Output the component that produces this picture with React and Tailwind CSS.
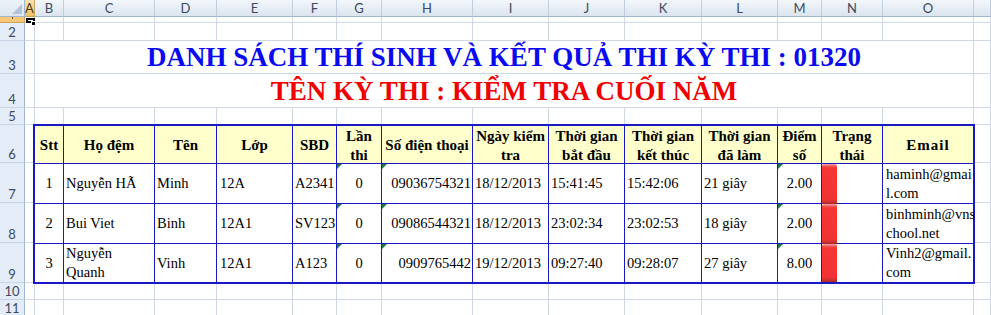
import React from 'react';

const LETTERS = ['A', 'B', 'C', 'D', 'E', 'F', 'G', 'H', 'I', 'J', 'K', 'L', 'M', 'N', 'O'];

const HEAD = [
  ['Stt'], ['Họ đệm'], ['Tên'], ['Lớp'], ['SBD'], ['Lần', 'thi'], ['Số điện thoại'],
  ['Ngày kiểm', 'tra'], ['Thời gian', 'bắt đầu'], ['Thời gian', 'kết thúc'],
  ['Thời gian', 'đã làm'], ['Điểm', 'số'], ['Trạng', 'thái'], ['Email'],
];

const DATA = [
  [['1'], ['Nguyễn HÃ'], ['Minh'], ['12A'], ['A2341'], ['0'], ['09036754321'], ['18/12/2013'], ['15:41:45'], ['15:42:06'], ['21 giây'], ['2.00'], null, ['haminh@gmai', 'l.com']],
  [['2'], ['Bui Viet'], ['Binh'], ['12A1'], ['SV123'], ['0'], ['09086544321'], ['18/12/2013'], ['23:02:34'], ['23:02:53'], ['18 giây'], ['2.00'], null, ['binhminh@vns', 'chool.net']],
  [['3'], ['Nguyễn', 'Quanh'], ['Vinh'], ['12A1'], ['A123'], ['0'], ['0909765442'], ['19/12/2013'], ['09:27:40'], ['09:28:07'], ['27 giây'], ['8.00'], null, ['Vinh2@gmail.', 'com']],
];

const ALIGN = [
  'justify-center text-center',
  'justify-start pl-[2px]',
  'justify-start pl-[2px]',
  'justify-start pl-[3px]',
  'justify-start pl-[2px]',
  'justify-center text-center',
  'justify-end pr-[1px]',
  'justify-start pl-[2px]',
  'justify-start pl-[2px]',
  'justify-start pl-[2px]',
  'justify-start pl-[2px]',
  'justify-center text-center',
  'justify-start',
  'justify-start pl-[3px]',
];

const TRIANGLE_COLS = [5, 6, 11];

function border(r, c) {
  const right = c < 13;
  const bottom = r < 3;
  if (right && bottom) return 'border-r border-b border-[#1818c8]';
  if (right) return 'border-r border-[#1818c8]';
  if (bottom) return 'border-b border-[#1818c8]';
  return '';
}

function Triangle() {
  return (
    <svg className="absolute left-0 top-0" width="5" height="5" viewBox="0 0 5 5">
      <polygon points="0,0 5,0 0,5" fill="#1c7d3a" />
    </svg>
  );
}

function Cell({ className = '' }) {
  return <div className={`bg-white border-r border-b border-[#d0d7e5] ${className}`} />;
}

function RowHeader({ n }) {
  if (n === 1) {
    return (
      <div className="bg-[#f8c878] border-r border-b border-[#c9a35e] flex justify-center overflow-hidden">
        <div className="w-[1px] h-[2px] bg-[#6b5a3a]" />
      </div>
    );
  }
  return (
    <div className="bg-[#e4ecf7] border-r border-r-[#9eb6ce] border-b border-b-[#c5d3e4] flex items-end justify-center pb-[1px] text-[13px] leading-none text-[#3b4a60] font-['Lato',sans-serif]">
      {n}
    </div>
  );
}

function Table() {
  return (
    <div className="col-start-3 col-span-14 row-start-7 row-span-4 -ml-[2px] -mt-[1px] -mr-[1px] -mb-[1px] relative z-10 border-2 border-[#1818c8] bg-white grid grid-cols-[29px_91px_62px_76px_44px_45px_91px_76px_76px_77px_76px_44px_61px_90px] grid-rows-[38px_40px_40px_38px] font-['Liberation_Serif',serif] text-black">
      {HEAD.map((lines, c) => (
        <div
          key={`h${c}`}
          className={`${border(0, c)} bg-[#ffffcc] flex flex-col items-center justify-center pt-[2px] font-bold text-[15px] leading-[19px] whitespace-nowrap ${c === 13 ? 'tracking-[1px]' : ''}`}
        >
          {lines.map((l, i) => (
            <span key={i}>{l}</span>
          ))}
        </div>
      ))}
      {DATA.map((row, r) =>
        row.map((cell, c) => (
          <div
            key={`d${r}-${c}`}
            className={`${border(r + 1, c)} relative flex items-center ${ALIGN[c]} text-[14.5px] leading-[19px] whitespace-nowrap`}
          >
            {TRIANGLE_COLS.includes(c) && <Triangle />}
            {cell === null ? (
              <div
                className={`w-[15px] self-start rounded-t-[2px] bg-[linear-gradient(to_bottom,#f7a8a8_0px,#f25a5a_2px,#f43636_4px,#f23333_calc(100%_-_5px),#cc3030_calc(100%_-_2px),#a52626_100%)] ${r < 2 ? 'h-[40px]' : 'h-[38px]'}`}
              />
            ) : (
              <div className="flex flex-col">
                {cell.map((l, i) => (
                  <span key={i}>{l}</span>
                ))}
              </div>
            )}
          </div>
        ))
      )}
    </div>
  );
}

export default function App() {
  const rows = [];
  for (let n = 1; n <= 11; n++) {
    rows.push(<RowHeader key={`rh${n}`} n={n} />);
    if (n === 1) {
      rows.push(
        <div key="a1" className="bg-white border-r border-b border-[#d0d7e5] relative">
          <div className="absolute left-[1px] top-[1px] w-[9px] h-[5px] border-2 border-black z-20" />
          <div className="absolute left-[6px] top-[4px] w-[5px] h-[5px] bg-black border border-white z-20" />
        </div>
      );
      for (let i = 1; i < 16; i++) rows.push(<Cell key={`c${n}-${i}`} />);
    } else if (n === 3 || n === 4) {
      rows.push(<Cell key={`c${n}-a`} />);
      rows.push(
        <div
          key={`t${n}`}
          className={`col-span-14 bg-white border-r border-b border-[#d0d7e5] flex items-end justify-center font-['Liberation_Serif',serif] font-bold text-[27px] leading-[normal] whitespace-nowrap ${n === 3 ? 'text-[#0a0af0]' : 'text-[#f00000]'}`}
        >
          {n === 3 ? 'DANH SÁCH THÍ SINH VÀ KẾT QUẢ THI KỲ THI : 01320' : 'TÊN KỲ THI : KIỂM TRA CUỐI NĂM'}
        </div>
      );
      rows.push(<Cell key={`c${n}-p`} />);
    } else if (n >= 6 && n <= 9) {
      rows.push(<Cell key={`c${n}-a`} />);
      rows.push(<Cell key={`c${n}-p`} />);
    } else {
      for (let i = 0; i < 16; i++) rows.push(<Cell key={`c${n}-${i}`} />);
    }
  }

  return (
    <div className="w-[991px] h-[315px] overflow-hidden bg-white">
      <div className="grid grid-cols-[25px_10px_29px_91px_62px_76px_44px_45px_91px_76px_76px_77px_76px_44px_61px_91px_1fr] grid-rows-[17px_6px_18px_33px_34px_17px_38px_40px_40px_40px_17px_17px]">
        <div className="bg-[linear-gradient(to_bottom,#eef3f9,#dce5f0)] border-r border-b border-[#9eb6ce] relative">
          <svg className="absolute right-[2px] bottom-[2px]" width="10" height="10" viewBox="0 0 10 10">
            <polygon points="10,0 10,10 0,10" fill="#b4c4d8" />
          </svg>
        </div>
        {LETTERS.map((l) => (
          <div
            key={l}
            className={`border-r border-b flex items-center justify-center text-[13px] leading-none font-['Lato',sans-serif] ${
              l === 'A'
                ? 'bg-[linear-gradient(to_bottom,#fae3ad,#f1c262)] border-r-[#c9a35e] border-b-[#c9a35e] text-[#4a3a20]'
                : 'bg-[linear-gradient(to_bottom,#f3f7fb,#dbe4ef)] border-r-[#c0cddd] border-b-[#9eb6ce] text-[#3b4a60]'
            }`}
          >
            {l}
          </div>
        ))}
        <div className="bg-[linear-gradient(to_bottom,#f3f7fb,#dbe4ef)] border-r border-b border-r-[#c0cddd] border-b-[#9eb6ce]" />
        {rows}
        <Table />
      </div>
    </div>
  );
}
